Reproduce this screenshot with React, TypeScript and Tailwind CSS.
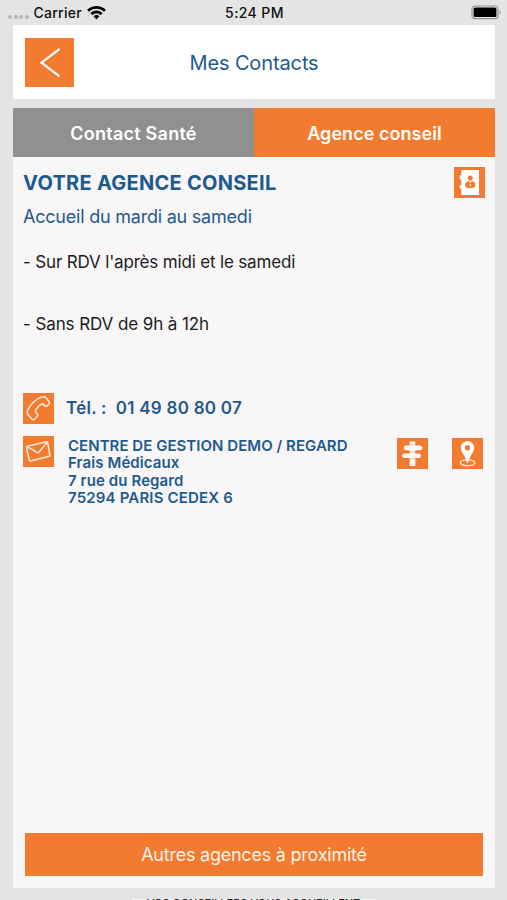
import React, { useState } from 'react';

type Tab = 'sante' | 'agence';

const BackIcon = () => (
  <svg viewBox="0 0 49 49" className="h-[49px] w-[49px]" fill="none" stroke="#fff" strokeWidth="2.2">
    <path d="M34.5 11 16.5 24.7 34.5 38.3" />
  </svg>
);

const WifiIcon = () => (
  <svg viewBox="0 0 19 14" className="h-[14px] w-[19px]" fill="#000">
    <path d="M9.5 0C13.1 0 16.4 1.4 18.9 3.7L17 5.7C15 3.9 12.4 2.8 9.5 2.8S4 3.9 2 5.7L.1 3.7C2.6 1.4 5.9 0 9.5 0Z" />
    <path d="M9.5 4.6C11.9 4.6 14 5.5 15.7 7L13.7 9C12.6 8 11.1 7.4 9.5 7.4S6.4 8 5.3 9L3.3 7C5 5.5 7.1 4.6 9.5 4.6Z" />
    <path d="M9.5 9.1C10.6 9.1 11.6 9.5 12.4 10.2L9.5 13.4 6.6 10.2C7.4 9.5 8.4 9.1 9.5 9.1Z" />
  </svg>
);

const BatteryIcon = () => (
  <svg viewBox="0 0 31 15" className="h-[15px] w-[31px]">
    <rect x="1" y="1" width="26" height="12.6" rx="3" fill="#e4e4e4" stroke="#929292" strokeWidth="1.2" />
    <rect x="2.6" y="2.6" width="22.8" height="9.4" rx="1.6" fill="#000" />
    <path d="M28.6 5.3c1.5.5 1.5 3.6 0 4.1z" fill="#929292" />
  </svg>
);

const AddressBookIcon = () => (
  <svg viewBox="0 0 31 31" className="h-[31px] w-[31px]">
    <path fill="#fff" d="M7.3 3H25v25H7.3v-6.5H5.7v-3.5h1.6V12.5H5.7V8.5h1.6z" />
    <circle cx="16.3" cy="11" r="2.5" fill="#f27b30" />
    <path fill="#f27b30" d="M14.3 14.2h4c2 .5 3.2 1.7 3.2 3.7 0 2.2-2 3.3-5.2 3.3s-5.2-1.1-5.2-3.3c0-2 1.2-3.2 3.2-3.7z" />
    <path fill="#fff" d="M15.3 14.2h2l-.5 1.8h-1zM15.5 17.5h1.6v1.5h-1.6z" />
  </svg>
);

const PhoneIcon = () => (
  <svg viewBox="0 0 31 31" className="h-[31px] w-[31px]" fill="none" stroke="#ffe9d8" strokeWidth="1.5" strokeLinejoin="round">
    <path d="M17 4.6 20.5 3.8Q22 3.5 23 4.8L26.3 9Q27 10.2 26 11.2L23.8 13Q22.5 13.8 21.5 12.7L20 10.8Q17 11.3 15 13.8 12.6 16.5 12.5 19L14.5 21.3Q15.4 22.5 14.3 23.5L11.3 26.3Q10 27.3 8.8 26L4.8 21.5Q3.8 20.3 4.3 18.5 7.5 9.5 17 4.6Z" />
  </svg>
);

const MailIcon = () => (
  <svg viewBox="0 0 31 31" className="h-[31px] w-[31px]" fill="none" stroke="#ffe9d8" strokeWidth="1.5" strokeLinejoin="round">
    <path d="M4 10.3 23.5 5.7Q24.5 5.5 24.7 6.5L27 20 7.5 25Q6.4 25.2 6.2 24.2L3.5 11.5Q3.3 10.5 4 10.3Z" />
    <path d="M4 10.5 14.2 16.5Q15.4 17.1 16.1 16L24.3 6" />
  </svg>
);

const SignpostIcon = () => (
  <svg viewBox="0 0 31 31" className="h-[31px] w-[31px]" fill="#fff">
    <path d="M12.7 3.5h5.6V28h-5.6z" />
    <path d="M8 7.5h15.5l2.5 2.4-2.5 2.4H8L6.5 9.9zM7 15.5h15.5l1.5 2.3-1.5 2.3H7l-2.5-2.3z" />
    <path d="M12.7 6.9h5.6M12.7 14h5.6M12.7 20.7h5.6" stroke="#f27b30" strokeWidth=".5" />
  </svg>
);

const PinIcon = () => (
  <svg viewBox="0 0 31 31" className="h-[31px] w-[31px]">
    <ellipse cx="15.5" cy="24.8" rx="7.2" ry="2.9" fill="none" stroke="#ffe9d8" strokeWidth="1.3" />
    <path fill="#fff" d="M15.5 3.3c4 0 6.7 2.9 6.7 6.5 0 4.8-5 8.5-6.1 15h-1.2C13.8 18.3 8.8 14.6 8.8 9.8c0-3.6 2.7-6.5 6.7-6.5z" />
    <circle cx="15.5" cy="9.8" r="2.7" fill="#f27b30" />
  </svg>
);

const App: React.FC = () => {
  const [activeTab, setActiveTab] = useState<Tab>('agence');

  return (
    <div className="flex h-[900px] w-[507px] flex-col overflow-hidden bg-[#e4e4e4] font-['Inter',sans-serif] text-[#1f5a8e]">
      <div className="grid h-[25px] shrink-0 grid-cols-[1fr_auto_1fr] items-center pr-[5px] pl-2 text-[14px] font-medium text-[#111]">
        <div className="flex items-center">
          <div className="mt-2 mr-[5px] flex gap-[1.5px]">
            {[0, 1, 2, 3].map((dot) => (
              <span key={dot} className="h-1 w-1 rounded-full bg-[#b5b5b5]" />
            ))}
          </div>
          <span className="mr-[5px] tracking-[0.25px]">Carrier</span>
          <WifiIcon />
        </div>
        <span className="mr-px tracking-[0.4px]">5:24 PM</span>
        <div className="flex justify-end">
          <BatteryIcon />
        </div>
      </div>

      <header className="mx-[13px] grid h-[74px] w-[482px] shrink-0 grid-cols-[49px_1fr_49px] items-center bg-white px-3">
        <button className="bg-[#f27b30]">
          <BackIcon />
        </button>
        <h1 className="pt-[2px] text-center text-[20px] tracking-[-0.12px]">Mes Contacts</h1>
      </header>

      <nav className="mx-[13px] mt-[9px] flex h-[49px] w-[482px] shrink-0 text-[18px] font-semibold text-white">
        <button
          className={`${activeTab === 'sante' ? 'bg-[#f27b30]' : 'bg-[#909090]'} w-[241px] pt-px tracking-[0.25px]`}
          onClick={() => setActiveTab('sante')}
        >
          Contact Santé
        </button>
        <button
          className={`${activeTab === 'agence' ? 'bg-[#f27b30]' : 'bg-[#909090]'} w-[241px] pt-px tracking-[0.05px]`}
          onClick={() => setActiveTab('agence')}
        >
          Agence conseil
        </button>
      </nav>

      <main className="mx-[13px] flex h-[731px] w-[482px] shrink-0 flex-col bg-[#f8f6f7]">
        <div className="flex h-[41px] items-end justify-between px-[10px]">
          <h2 className="text-[20px] leading-[30px] font-bold tracking-[0.27px]">VOTRE AGENCE CONSEIL</h2>
          <div className="bg-[#f27b30]">
            <AddressBookIcon />
          </div>
        </div>
        <p className="mt-[7px] pl-[10px] text-[18px] leading-6 tracking-[-0.22px]">Accueil du mardi au samedi</p>
        <div className="mt-[21px] pl-[10px] text-[17px] leading-6 text-[#1c1c1c]">
          <p className="tracking-[-0.17px]">- Sur RDV l'après midi et le samedi</p>
          <p className="mt-[38px] tracking-[-0.1px]">- Sans RDV de 9h à 12h</p>
        </div>

        <div className="mt-[57px] flex h-[31px] items-center pl-[10px]">
          <div className="mr-3 bg-[#f27b30]">
            <PhoneIcon />
          </div>
          <p className="text-[17px] font-semibold tracking-[0.26px] whitespace-pre">Tél. :  01 49 80 80 07</p>
        </div>

        <div className="mt-3 flex pl-[10px]">
          <div className="h-[31px] bg-[#f27b30]">
            <MailIcon />
          </div>
          <address className="ml-[14px] w-[329px] pt-px text-[15px] leading-[17.3px] font-semibold tracking-[0.1px] not-italic">
            <span className="tracking-[0.04px]">CENTRE DE GESTION DEMO / REGARD</span>
            <br />
            Frais Médicaux
            <br />
            7 rue du Regard
            <br />
            <span className="tracking-[0.17px]">75294 PARIS CEDEX 6</span>
          </address>
          <button className="mt-[2px] h-[31px] bg-[#f27b30]">
            <SignpostIcon />
          </button>
          <button className="mt-[2px] ml-6 h-[31px] bg-[#f27b30]">
            <PinIcon />
          </button>
        </div>

        <button className="mx-3 mt-auto mb-3 h-[43px] bg-[#f27b30] text-[18px] tracking-[-0.23px] text-[#fff3e9]">
          Autres agences à proximité
        </button>
      </main>

      {/* next block, only its top edge fits on screen */}
      <footer className="mx-auto mt-[11px] h-[20px] w-[244px] shrink-0 bg-[#f4f4f4] text-center text-[11px] leading-[8px] font-medium whitespace-nowrap text-[#222]">
        VOS CONSEILLERS VOUS ACCUEILLENT
      </footer>
    </div>
  );
};

export default App;
